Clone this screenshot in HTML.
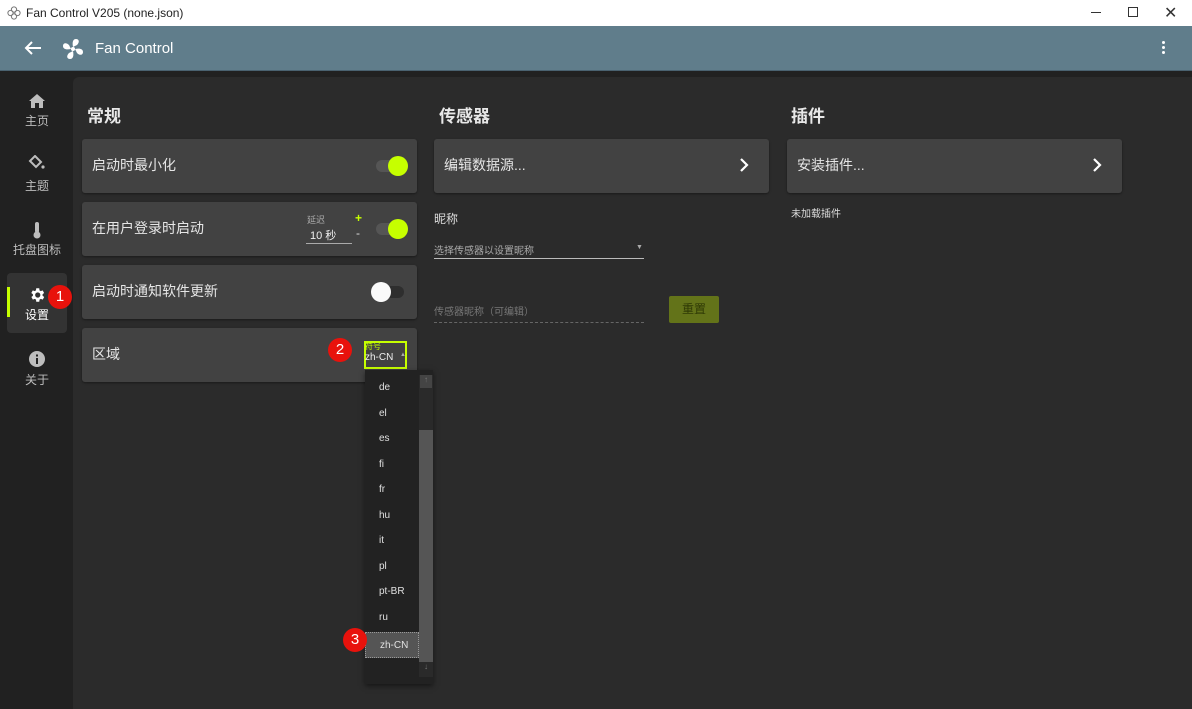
<!DOCTYPE html>
<html><head><meta charset="utf-8"><style>
*{margin:0;padding:0;box-sizing:border-box}
body{width:1192px;height:709px;overflow:hidden;background:#212121;font-family:"Liberation Sans","Noto Sans CJK SC",sans-serif;color:#e8e8e8;position:relative}
.abs{position:absolute}
.title{left:0;top:0;width:1192px;height:26px;background:#fff;color:#222;font-size:12px}
.hdr{left:0;top:26px;width:1192px;height:45px;background:#607d8b;border-bottom:1px solid #4a6270}
.panel{left:73px;top:77px;width:1119px;height:632px;background:#2b2b2b;border-radius:6px 0 0 0}
.card{background:#424242;border-radius:3px;height:54px;box-shadow:0 1px 2px rgba(0,0,0,.4)}
.ct{font-size:14px;color:#e6e6e6;top:16px;left:10px}
.nav{width:60px;text-align:center;font-size:12px;color:#bdbdbd;left:7px}
.h{font-size:17px;font-weight:bold;color:#e8e8e8}
.tr{width:28px;height:12px;border-radius:6px;background:#555}
.th{width:20px;height:20px;border-radius:50%}
.dd div.i{height:25.5px;line-height:25.5px;padding-left:14px;font-size:10px;color:#e0e0e0}
</style></head><body>
<div class="abs title">
 <svg class="abs" style="left:7px;top:6px" width="14" height="14" viewBox="0 0 14 14" fill="none" stroke="#777" stroke-width="1"><circle cx="7" cy="3.5" r="2.6"/><circle cx="7" cy="10.5" r="2.6"/><circle cx="3.5" cy="7" r="2.6"/><circle cx="10.5" cy="7" r="2.6"/></svg>
 <span class="abs" style="left:26px;top:6px">Fan Control V205 (none.json)</span>
 <div class="abs" style="left:1091px;top:12px;width:10px;height:1px;background:#333"></div>
 <div class="abs" style="left:1128px;top:7px;width:10px;height:10px;border:1px solid #333"></div>
 <span class="abs" style="left:1164px;top:3px;font-size:16px;color:#333">✕</span>
</div>
<div class="abs hdr">
 <svg class="abs" style="left:24px;top:14px" width="18" height="16" viewBox="0 0 18 16"><path d="M17 8H2M8 2L2 8l6 6" stroke="#fff" stroke-width="2" fill="none"/></svg>
 <svg class="abs" style="left:61px;top:11px" width="24" height="24" viewBox="0 0 24 24" fill="#fff"><circle cx="12" cy="12" r="2"/><path d="M12 10C11 5 12 2 15 2s4 3 1 6zM14 12c5-1 8 0 8 3s-3 4-6 1zM12 14c1 5 0 8-3 8s-4-3-1-6zM10 12C5 13 2 12 2 9s3-4 6-1z"/></svg>
 <span class="abs" style="left:95px;top:14px;font-size:15px;color:#fff">Fan Control</span>
 <div class="abs" style="left:1162px;top:15px;width:3px;height:3px;background:#fff;border-radius:50%;box-shadow:0 5px 0 #fff,0 10px 0 #fff"></div>
</div>
<svg class="abs" style="left:28px;top:93px" width="18" height="16" viewBox="0 0 18 16"><path d="M9 1L1 8h2v7h4v-5h4v5h4V8h2z" fill="#bdbdbd"/></svg>
<div class="abs nav" style="top:112px">主页</div>
<svg class="abs" style="left:28px;top:155px" width="18" height="16" viewBox="0 0 18 16"><path d="M7 1l6 6-5 5-6-6z" fill="none" stroke="#bdbdbd" stroke-width="2"/><circle cx="15" cy="12" r="1.6" fill="#bdbdbd"/></svg>
<div class="abs nav" style="top:177px">主题</div>
<svg class="abs" style="left:32px;top:221px" width="10" height="18" viewBox="0 0 10 18"><rect x="3" y="1" width="4" height="11" rx="2" fill="#bdbdbd"/><circle cx="5" cy="14" r="3.5" fill="#bdbdbd"/></svg>
<div class="abs nav" style="top:241px">托盘图标</div>
<div class="abs" style="left:7px;top:273px;width:60px;height:60px;background:#333;border-radius:4px"></div>
<div class="abs" style="left:7px;top:287px;width:3px;height:30px;background:#c6ff00"></div>
<svg class="abs" style="left:28px;top:286px" width="18" height="18" viewBox="0 0 24 24"><path fill="#fff" d="M19.4 13a7.5 7.5 0 000-2l2.1-1.6-2-3.5-2.5 1a7 7 0 00-1.7-1L15 3h-4l-.4 2.9a7 7 0 00-1.7 1l-2.5-1-2 3.5L6.6 11a7.5 7.5 0 000 2l-2.1 1.6 2 3.5 2.5-1a7 7 0 001.7 1L11 21h4l.4-2.9a7 7 0 001.7-1l2.5 1 2-3.5zM13 15.5a3.5 3.5 0 110-7 3.5 3.5 0 010 7z"/></svg>
<div class="abs nav" style="top:306px;color:#fff">设置</div>
<div class="abs" style="left:48px;top:285px;width:24px;height:24px;border-radius:50%;background:#e8120c;color:#fff;font-size:15px;text-align:center;line-height:24px">1</div>
<svg class="abs" style="left:28px;top:350px" width="18" height="18" viewBox="0 0 18 18"><circle cx="9" cy="9" r="8" fill="#bdbdbd"/><rect x="8" y="8" width="2" height="6" fill="#212121"/><rect x="8" y="4.5" width="2" height="2" fill="#212121"/></svg>
<div class="abs nav" style="top:371px">关于</div>

<div class="abs panel"></div>
<div class="abs h" style="left:87px;top:102px">常规</div>
<div class="abs h" style="left:439px;top:102px">传感器</div>
<div class="abs h" style="left:791px;top:102px">插件</div>

<div class="abs card" style="left:82px;top:139px;width:335px"><span class="abs ct">启动时最小化</span>
 <div class="abs tr" style="left:294px;top:21px"></div><div class="abs th" style="left:306px;top:17px;background:#c6ff00"></div></div>
<div class="abs card" style="left:82px;top:202px;width:335px"><span class="abs ct">在用户登录时启动</span>
 <span class="abs" style="left:225px;top:11px;font-size:9px;color:#aaa">延迟</span>
 <span class="abs" style="left:228px;top:25px;font-size:11px;color:#eee">10 秒</span>
 <div class="abs" style="left:224px;top:41px;width:46px;height:1px;background:#aaa"></div>
 <span class="abs" style="left:273px;top:9px;font-size:12px;color:#c6ff00;font-weight:bold">+</span>
 <span class="abs" style="left:274px;top:24px;font-size:12px;color:#ddd">-</span>
 <div class="abs tr" style="left:294px;top:21px"></div><div class="abs th" style="left:306px;top:17px;background:#c6ff00"></div></div>
<div class="abs card" style="left:82px;top:265px;width:335px"><span class="abs ct">启动时通知软件更新</span>
 <div class="abs tr" style="left:294px;top:21px;background:#2e2e2e"></div><div class="abs th" style="left:289px;top:17px;background:#fafafa"></div></div>
<div class="abs card" style="left:82px;top:328px;width:335px"><span class="abs ct">区域</span>
 <div class="abs" style="left:282px;top:13px;width:43px;height:28px;border:2px solid #c6ff00"></div>
 <span class="abs" style="left:283px;top:13px;font-size:8px;color:#c6ff00">符号</span>
 <span class="abs" style="left:283px;top:24px;font-size:10px;color:#eee">zh-CN</span>
 <span class="abs" style="left:318px;top:24px;font-size:6px;color:#aaa">▲</span></div>
<div class="abs" style="left:328px;top:338px;width:24px;height:24px;border-radius:50%;background:#e8120c;color:#fff;font-size:15px;text-align:center;line-height:24px">2</div>

<div class="abs dd" style="left:365px;top:370px;width:68px;height:314px;background:#222;box-shadow:0 2px 5px rgba(0,0,0,.5)">
 <div style="padding-top:5px;width:54px">
 <div class="i">de</div><div class="i">el</div><div class="i">es</div><div class="i">fi</div><div class="i">fr</div><div class="i">hu</div><div class="i">it</div><div class="i">pl</div><div class="i">pt-BR</div><div class="i">ru</div>
 <div class="i" style="background:#555;border:1px dotted #999;margin-top:2px">zh-CN</div>
 </div>
 <div class="abs" style="left:54px;top:5px;width:14px;height:302px;background:#2a2a2a"></div>
 <div class="abs" style="left:54px;top:60px;width:14px;height:232px;background:#555"></div>
 <div class="abs" style="left:55px;top:5px;width:12px;height:13px;background:#444;font-size:8px;color:#777;text-align:center">↑</div>
 <div class="abs" style="left:55px;top:292px;width:12px;height:13px;font-size:8px;color:#777;text-align:center">↓</div>
</div>
<div class="abs" style="left:343px;top:628px;width:24px;height:24px;border-radius:50%;background:#e8120c;color:#fff;font-size:15px;text-align:center;line-height:24px">3</div>

<div class="abs card" style="left:434px;top:139px;width:335px"><span class="abs ct">编辑数据源...</span>
 <svg class="abs" style="left:305px;top:18px" width="10" height="16" viewBox="0 0 10 16"><path d="M2 2l6 6-6 6" stroke="#fff" stroke-width="2.2" fill="none"/></svg></div>
<div class="abs" style="left:434px;top:210px;font-size:12px;color:#ddd">昵称</div>
<div class="abs" style="left:434px;top:242px;font-size:10px;color:#aaa">选择传感器以设置昵称</div>
<span class="abs" style="left:636px;top:244px;font-size:7px;color:#aaa">▼</span>
<div class="abs" style="left:434px;top:258px;width:210px;height:1px;background:#bbb"></div>
<div class="abs" style="left:434px;top:303px;font-size:10px;color:#777">传感器昵称（可编辑）</div>
<div class="abs" style="left:434px;top:322px;width:210px;border-top:1px dashed #666"></div>
<div class="abs" style="left:669px;top:296px;width:50px;height:27px;background:#637319;border-radius:2px;color:#2f3a05;font-size:12px;text-align:center;line-height:27px">重置</div>

<div class="abs card" style="left:787px;top:139px;width:335px"><span class="abs ct">安装插件...</span>
 <svg class="abs" style="left:305px;top:18px" width="10" height="16" viewBox="0 0 10 16"><path d="M2 2l6 6-6 6" stroke="#fff" stroke-width="2.2" fill="none"/></svg></div>
<div class="abs" style="left:791px;top:205px;font-size:10px;color:#ddd">未加载插件</div>
</body></html>
